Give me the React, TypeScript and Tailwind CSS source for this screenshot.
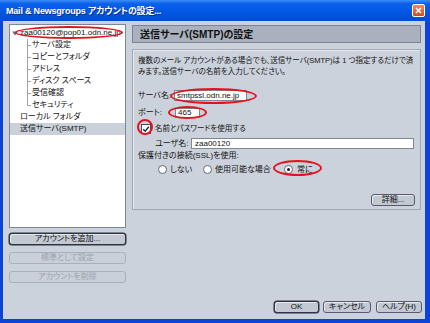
import React from "react";

const FONT =
  "font-['Liberation_Sans','Noto_Sans_CJK_JP',sans-serif] [font-feature-settings:'palt']";

function Btn({
  children,
  w,
  def,
  disabled,
}: {
  children: React.ReactNode;
  w: string;
  def?: boolean;
  disabled?: boolean;
}) {
  const base =
    "h-[12px] flex items-center justify-center rounded-[3px] text-[8px] leading-[10px] ";
  const style = disabled
    ? "border border-[#a9b0ba] bg-[#c9d0d9] text-[#9aa2ad]"
    : def
    ? "border border-[#2f3540] bg-[#c2c9d3] text-[#111] shadow-[inset_1px_1px_0_#e6eaef,0_0_0_0.5px_#2f3540]"
    : "border border-[#555c68] bg-[#c2c9d3] text-[#111] shadow-[inset_1px_1px_0_#e6eaef]";
  return <div className={base + style + " " + w}>{children}</div>;
}

function Ellipse({ cls }: { cls: string }) {
  return (
    <div
      className={
        "absolute border-2 border-[#e5121d] rounded-[50%] pointer-events-none " +
        cls
      }
    />
  );
}

function TreeChild({ label, last }: { label: string; last?: boolean }) {
  return (
    <div className="h-[12px] flex items-center">
      <svg width="5" height="12" className="ml-[17px] shrink-0">
        <line x1="0.5" y1="0" x2="0.5" y2={last ? 6.5 : 12} stroke="#9ca3ad" strokeWidth="1" />
        <line x1="0.5" y1="6.5" x2="4" y2="6.5" stroke="#9ca3ad" strokeWidth="1" />
      </svg>
      <span>{label}</span>
    </div>
  );
}

function Radio({ checked }: { checked?: boolean }) {
  return (
    <div className="w-[9px] h-[9px] rounded-full border border-[#5f6a79] bg-white flex items-center justify-center shrink-0">
      {checked && <div className="w-[3px] h-[3px] rounded-full bg-[#1a1a1a]" />}
    </div>
  );
}

export default function App() {
  return (
    <div
      className={
        "relative w-[430px] h-[323px] overflow-hidden bg-[#0b44d8] flex flex-col text-[#111] " +
        FONT
      }
    >
      {/* Title bar */}
      <div className="h-[21px] shrink-0 flex items-center justify-between bg-[linear-gradient(to_bottom,#3d8cf8_0%,#0a60ea_18%,#0258e4_55%,#004ad6_100%)]">
        <span className="pl-[6px] text-white font-bold text-[9px] tracking-[-0.2px] leading-[12px] [text-shadow:1px_1px_0_#0a2f8a]">
          Mail &amp; Newsgroups アカウントの設定...
        </span>
        <div className="mr-[5px] w-[13px] h-[13px] rounded-[2px] border border-white bg-[linear-gradient(to_bottom,#f08a63,#d4481e)] flex items-center justify-center">
          <svg width="7" height="7" viewBox="0 0 7 7">
            <path d="M1 1L6 6M6 1L1 6" stroke="white" strokeWidth="1.6" />
          </svg>
        </div>
      </div>

      {/* Body */}
      <div className="flex-1 ml-[3px] mr-[5px] mb-[4px] bg-[#cbd2db] flex flex-col">
        <div className="flex pt-[3px] pl-[6px]">
          {/* Left column */}
          <div className="w-[117px] flex flex-col">
            <div className="h-[204px] bg-white border border-[#7d8795] pt-[2px] text-[8px] leading-[12px]">
              <div className="h-[12px] flex items-center">
                <svg width="6" height="5" className="ml-[2px] shrink-0">
                  <path d="M0 0.5H6L3 4.5Z" fill="#6b7280" />
                </svg>
                <span className="ml-[2px]">zaa00120@pop01.odn.ne.jp</span>
              </div>
              <TreeChild label="サーバ設定" />
              <TreeChild label="コピーとフォルダ" />
              <TreeChild label="アドレス" />
              <TreeChild label="ディスク スペース" />
              <TreeChild label="受信確認" />
              <TreeChild label="セキュリティ" last />
              <div className="h-[12px] flex items-center pl-[10px]">ローカル フォルダ</div>
              <div className="h-[12px] flex items-center pl-[10px] bg-[#cad1da]">
                送信サーバ(SMTP)
              </div>
            </div>
            <div className="mt-[5px] flex flex-col gap-[7px]">
              <Btn w="w-[117px]" def>
                アカウントを追加...
              </Btn>
              <Btn w="w-[117px]" disabled>
                標準として設定
              </Btn>
              <Btn w="w-[117px]" disabled>
                アカウントを削除
              </Btn>
            </div>
          </div>

          {/* Right column */}
          <div className="ml-[6px] w-[289px] flex flex-col">
            <div className="mt-[1px] h-[18px] bg-[#a8b1bd] border border-[#7b8491] flex items-center pl-[7px] font-bold text-[10px]">
              送信サーバ(SMTP)の設定
            </div>
            <div className="mt-[6px] h-[161px] border border-[#a0a8b3] shadow-[inset_1px_1px_0_#e4e8ee] pl-[5px] pr-[5px] pt-[5px] flex flex-col text-[8px] leading-[11px]">
              <div className="whitespace-nowrap text-[7.5px]">
                複数のメール アカウントがある場合でも、送信サーバ(SMTP)は 1 つ指定するだけで済
              </div>
              <div className="whitespace-nowrap text-[7.5px]">
                みます。送信サーバの名前を入力してください。
              </div>
              <div className="mt-[13px] h-[11px] flex items-center">
                <span className="w-[36px] shrink-0">サーバ名:</span>
                <div className="w-[73px] h-[11px] bg-white border border-[#7f8794] pl-[2px] flex items-center leading-[9px]">
                  smtpssl.odn.ne.jp
                </div>
              </div>
              <div className="mt-[6px] h-[11px] flex items-center">
                <span className="w-[37px] shrink-0">ポート:</span>
                <div className="w-[25px] h-[10px] bg-white border border-[#7f8794] pl-[2px] flex items-center leading-[9px]">
                  465
                </div>
              </div>
              <div className="mt-[5px] h-[11px] flex items-center">
                <div className="ml-[3px] w-[10px] h-[10px] border border-[#3e4d66] bg-white flex items-center justify-center shrink-0">
                  <svg width="8" height="8" viewBox="0 0 8 8">
                    <path d="M1.2 4.2L3.2 6.2L6.8 1.8" fill="none" stroke="#1b2a44" strokeWidth="1.4" />
                  </svg>
                </div>
                <span className="ml-[4px] text-[7.5px]">名前とパスワードを使用する</span>
              </div>
              <div className="mt-[4px] h-[11px] flex items-center pl-[17px]">
                <span className="w-[36px] shrink-0">ユーザ名:</span>
                <div className="flex-1 mr-[1px] h-[11px] bg-white border border-[#7f8794] pl-[3px] flex items-center leading-[9px]">
                  zaa00120
                </div>
              </div>
              <div className="mt-[1px] h-[11px] flex items-center">保護付きの接続(SSL)を使用:</div>
              <div className="mt-[3px] h-[10px] flex items-center pl-[20px]">
                <div className="w-[45px] flex items-center gap-[3px]">
                  <Radio />
                  <span>しない</span>
                </div>
                <div className="w-[81px] flex items-center gap-[3px]">
                  <Radio />
                  <span>使用可能な場合</span>
                </div>
                <div className="flex items-center gap-[4px]">
                  <Radio checked />
                  <span>常に</span>
                </div>
              </div>
              <div className="mt-[20px] self-end">
                <Btn w="w-[44px]">詳細...</Btn>
              </div>
            </div>
          </div>
        </div>

        <div className="flex-1" />
        <div className="flex justify-end items-center pr-[3px] pb-[6px]">
          <Btn w="w-[45px]" def>
            OK
          </Btn>
          <div className="ml-[4px]">
            <Btn w="w-[48px]">キャンセル</Btn>
          </div>
          <div className="ml-[5px]">
            <Btn w="w-[46px]">ヘルプ(H)</Btn>
          </div>
        </div>
      </div>

      {/* Annotation ellipses */}
      <Ellipse cls="left-[15px] top-[26px] w-[108px] h-[13px]" />
      <Ellipse cls="left-[170px] top-[88px] w-[87px] h-[16px]" />
      <Ellipse cls="left-[168px] top-[106px] w-[39px] h-[13px]" />
      <Ellipse cls="left-[137px] top-[119px] w-[16px] h-[16px]" />
      <Ellipse cls="left-[273px] top-[160px] w-[49px] h-[16px]" />
    </div>
  );
}
